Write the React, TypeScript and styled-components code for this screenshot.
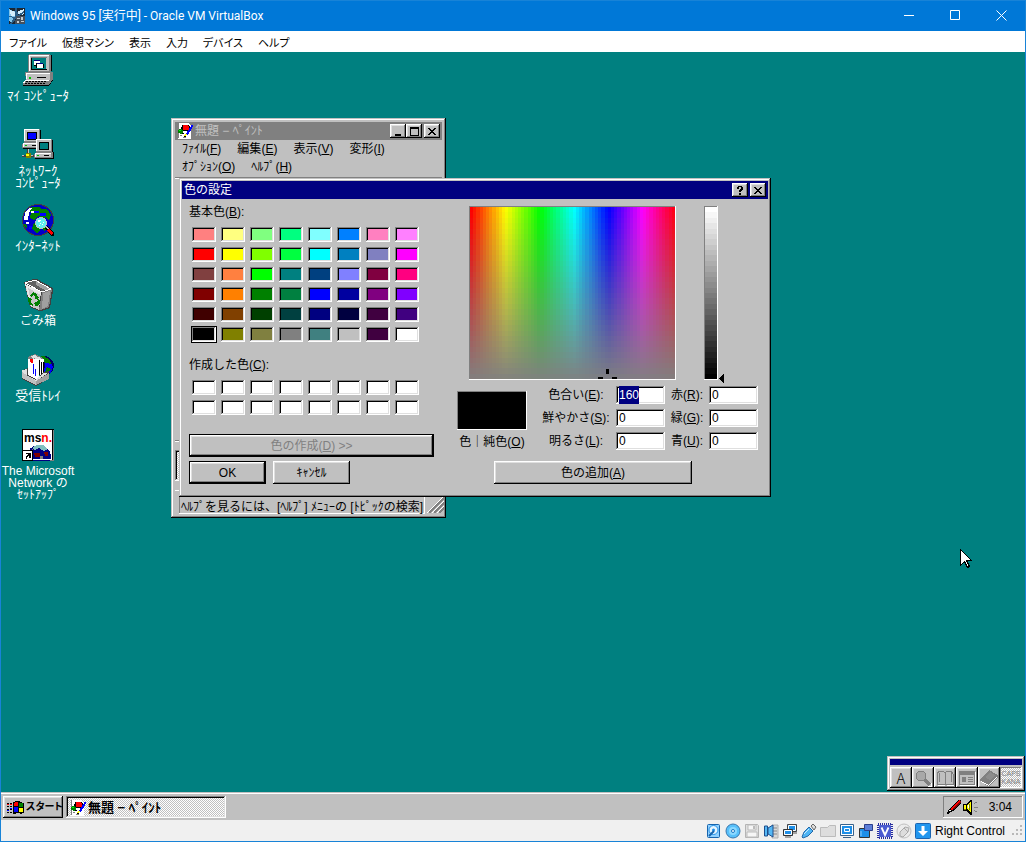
import React, { useEffect, useRef } from "react";
import styled, { createGlobalStyle, css } from "styled-components";

const GlobalStyle = createGlobalStyle`
  * { box-sizing: border-box; }
  body { margin: 0; background: #f0f0f0; }
  button, input { font: inherit; color: inherit; margin: 0; padding: 0; border: 0; border-radius: 0; }
  svg { display: block; flex: none; }
`;

const raisedWindow = css`
  background: #c0c0c0;
  box-shadow: inset -1px -1px #000, inset 1px 1px #c0c0c0, inset -2px -2px #808080, inset 2px 2px #fff;
`;
const raised = css`
  background: #c0c0c0;
  box-shadow: inset -1px -1px #000, inset 1px 1px #fff, inset -2px -2px #808080, inset 2px 2px #dfdfdf;
`;
const sunken = css`
  box-shadow: inset -1px -1px #fff, inset 1px 1px #808080, inset -2px -2px #dfdfdf, inset 2px 2px #000;
`;
const shallow = css`
  box-shadow: inset -1px -1px #fff, inset 1px 1px #808080;
`;
const dither = css`
  background: repeating-conic-gradient(#fff 0 25%, #c0c0c0 0 50%) 0 0 / 2px 2px;
`;

/* ---------- host window ---------- */

const Shell = styled.div`
  min-height: 100vh;
  display: flex;
  flex-direction: column;
  border: 1px solid #1883d7;
  color: #000;
  font: 12px/14px "Liberation Sans", "Noto Sans CJK JP", sans-serif;
`;
const HostTitle = styled.header`
  display: flex;
  align-items: center;
  gap: 5px;
  height: 30px;
  padding-left: 8px;
  background: #0078d7;
  color: #fff;
  font: 12px/16px Roboto, "Noto Sans CJK JP", sans-serif;
`;
const HostName = styled.span`
  flex: 1;
`;
const HostButton = styled.button`
  width: 46px;
  height: 30px;
  display: grid;
  place-items: center;
  background: none;
`;
const HostButtons = styled.div`
  display: flex;
`;
const HostMenu = styled.nav`
  display: flex;
  align-items: center;
  gap: 15px;
  height: 21px;
  padding-left: 8px;
  background: #fff;
  font: 11px/16px "Noto Sans CJK JP", sans-serif;
  font-feature-settings: "palt";
`;
const PlainButton = styled.button`
  background: none;
  white-space: nowrap;
`;

/* ---------- desktop ---------- */

const Desktop = styled.main`
  position: relative;
  flex: 1;
  min-height: 500px;
  background: #008080;
  overflow: hidden;
`;
const IconColumn = styled.div`
  display: flex;
  flex-direction: column;
  width: 74px;
  padding-top: 2px;
`;
const DesktopIcon = styled.button<{ $small?: boolean }>`
  display: flex;
  flex-direction: column;
  align-items: center;
  gap: 4px;
  height: 75px;
  background: none;
  color: #fff;
  font-size: ${(p) => (p.$small ? 12 : 13)}px;
  line-height: 12px;
  white-space: pre;
`;

/* ---------- windows ---------- */

const PaintWindow = styled.section`
  position: absolute;
  left: 170px;
  top: 66px;
  width: 275px;
  height: 400px;
  padding: 4px;
  display: flex;
  flex-direction: column;
  ${raisedWindow}
`;
const TitleBar = styled.div<{ $active?: boolean }>`
  display: flex;
  align-items: center;
  gap: 2px;
  height: 18px;
  padding: 0 2px;
  background: ${(p) => (p.$active ? "#000080" : "#808080")};
  color: ${(p) => (p.$active ? "#fff" : "#c0c0c0")};
`;
const TitleText = styled.span`
  flex: 1;
`;
const TitleButton = styled.button`
  width: 16px;
  height: 14px;
  display: grid;
  place-items: center;
  color: #000;
  ${raised}
`;
const ButtonPair = styled.div`
  display: flex;
`;
const PaintMenu = styled.nav`
  display: flex;
  flex-wrap: wrap;
  column-gap: 16px;
  padding: 0 7px;
  line-height: 18px;
`;
const PaintBody = styled.div`
  flex: 1;
  display: flex;
  flex-direction: column;
  margin-top: 1px;
  border-top: 1px solid #808080;
`;
const PaintCanvas = styled.div`
  flex: 1;
  border-top: 1px solid #fff;
  border-bottom: 1px solid #808080;
`;
const PaletteBar = styled.div`
  height: 50px;
  padding: 8px 0;
  border-top: 1px solid #fff;
  border-bottom: 1px solid #fff;
`;
const PaletteWell = styled.div`
  width: 31px;
  height: 31px;
  ${dither}
  ${sunken}
`;
const PaintStatus = styled.footer`
  display: flex;
  justify-content: space-between;
  gap: 2px;
  height: 23px;
  padding-top: 5px;
  padding-left: 4px;
`;
const StatusField = styled.div`
  flex: 1;
  padding: 2px 2px 0;
  line-height: 18px;
  white-space: nowrap;
  ${shallow}
`;

const Dialog = styled.section`
  position: absolute;
  left: 178px;
  top: 126px;
  width: 592px;
  padding: 3px;
  ${raisedWindow}
`;
const DialogBody = styled.form`
  display: flex;
  gap: 23px;
  padding: 6px 10px 10px 7px;
`;
const LeftPane = styled.div`
  width: 245px;
  display: flex;
  flex-direction: column;
`;
const GroupLabel = styled.div`
  line-height: 14px;
  margin-bottom: 8px;
`;
const SwatchGrid = styled.div<{ $after: number }>`
  display: grid;
  grid-template-columns: repeat(8, 24px);
  gap: 5px;
  padding-left: 3px;
  margin-bottom: ${(p) => p.$after}px;
`;
const Swatch = styled.button<{ $color: string; $selected?: boolean }>`
  height: 15px;
  background: ${(p) => p.$color};
  outline: ${(p) => (p.$selected ? "1px solid #000" : "none")};
  ${sunken}
`;
const PushButton = styled.button<{ $framed?: boolean; $width: string }>`
  width: ${(p) => p.$width};
  height: 23px;
  ${raised}
  border: ${(p) => (p.$framed ? "1px solid #000" : "0")};
  &:disabled { color: #808080; }
`;
const ButtonRow = styled.div`
  display: flex;
  gap: 7px;
  margin-top: 4px;
`;
const RightPane = styled.div`
  flex: 1;
  display: flex;
  flex-direction: column;
`;
const Pickers = styled.div`
  display: flex;
  padding: 1px 0 0 12px;
  margin-bottom: 6px;
`;
const Well = styled.div`
  ${shallow}
  padding: 1px;
`;
const BarHolder = styled.div`
  display: flex;
  align-items: flex-end;
  gap: 1px;
  margin-left: 28px;
`;
const Arrow = styled.svg`
  margin-bottom: -3px;
`;
const ValuesRow = styled.div`
  display: flex;
  align-items: flex-start;
`;
const PreviewBox = styled.div`
  width: 70px;
  padding-top: 5px;
  text-align: center;
  white-space: nowrap;
`;
const Preview = styled.div`
  height: 39px;
  margin-bottom: 5px;
  background: #000;
  ${shallow}
`;
const FieldGrid = styled.div`
  flex: 1;
  display: grid;
  grid-template-columns: 80px 49px 1fr 49px;
  row-gap: 5px;
  padding-left: 9px;
  text-align: center;
  line-height: 18px;
`;
const NumberField = styled.input`
  width: 49px;
  height: 18px;
  padding: 0 3px;
  background: #fff;
  outline: none;
  ${sunken}
  &::selection { background: #000080; color: #fff; }
`;
const AddRow = styled.div`
  margin-top: 11px;
  padding-left: 37px;
`;

/* ---------- input bar, task bar, host status ---------- */

const InputBar = styled.section`
  position: absolute;
  right: 0;
  bottom: 1px;
  width: 138px;
  padding: 3px;
  ${raisedWindow}
`;
const InputCaption = styled.div`
  height: 6px;
  margin-bottom: 2px;
  background: #000080;
`;
const InputButtons = styled.div`
  display: grid;
  grid-template-columns: repeat(6, 22px);
`;
const InputButton = styled.button<{ $down?: boolean }>`
  height: 21px;
  display: grid;
  place-items: center;
  ${(p) => (p.$down ? css`${dither} ${shallow}` : raised)}
`;
const KeyState = styled.span`
  color: #808080;
  font-size: 7px;
  line-height: 8px;
`;
const Letter = styled.span`
  font-family: "Noto Sans CJK JP", sans-serif;
  font-weight: 300;
  font-size: 15px;
`;
const Pointer = styled.svg`
  position: absolute;
  left: 959px;
  top: 497px;
`;
const TaskBar = styled.div`
  display: flex;
  gap: 3px;
  height: 28px;
  padding: 4px 2px 2px;
  background: #c0c0c0;
  box-shadow: inset 0 1px #c0c0c0, inset 0 2px #fff;
`;
const StartButton = styled.button`
  display: flex;
  align-items: center;
  gap: 1px;
  width: 60px;
  padding-left: 4px;
  font-weight: bold;
  font-size: 10px;
  font-feature-settings: "palt";
  white-space: nowrap;
  ${raised}
`;
const TaskButton = styled.button`
  display: flex;
  align-items: center;
  gap: 2px;
  width: 160px;
  padding: 2px 0 0 4px;
  font-weight: bold;
  font-size: 13px;
  ${dither}
  ${sunken}
`;
const Tray = styled.div`
  display: flex;
  align-items: center;
  width: 80px;
  margin-left: auto;
  padding: 0 11px 0 3px;
  ${shallow}
`;
const Clock = styled.time`
  margin-left: auto;
`;
const HostStatus = styled.footer`
  display: flex;
  align-items: center;
  justify-content: flex-end;
  gap: 3px;
  height: 21px;
  padding-right: 2px;
  background: #f0f0f0;
  font: 12px/16px "Liberation Sans", sans-serif;
`;
const HostKey = styled.span`
  margin: 0 4px 0 1px;
`;

/* ---------- drawings ---------- */

type ArtProps = { w?: number; h?: number; children: React.ReactNode };
const Art = ({ w = 32, h = 32, children }: ArtProps) => (
  <svg width={w} height={h} viewBox={`0 0 ${w} ${h}`} shapeRendering="crispEdges" aria-hidden="true">
    {children}
  </svg>
);
const P = ({ c, d }: { c: string; d: string }) => <path fill={c} d={d} />;

const Computer = () => (
  <Art>
    <P c="#000" d="M8 17h22v-16h-2v16zM31 18v8l-4 6H1v-1h25l4-5v-8z" />
    <P c="#808080" d="M6 1h1V0h21v1h1v17H6zM3 18h28v7l-4 6H1v-3l3-3z" />
    <P c="#c0c0c0" d="M7 1h20v16H7zM4 19h24v7H4z" />
    <P c="#fff" d="M7 1h20v1H8v15H7zM4 19h24v1H5v5H4zM4 26h23v1H3v2H1v-1z" />
    <P c="#808080" d="M9 3h16v1H10v11H9z" />
    <P c="#000" d="M9 4h1v11h15v1H9z" />
    <P c="#008080" d="M10 4h14v11H10z" />
    <P c="#fff" d="M12 6h6v5h-6zM15 9h6v5h-6z" />
    <P c="#000080" d="M12 6h6v1h-6zM14 9h7v1h-7z" />
    <P c="#000" d="M12 11h3v1h-3zM14 9h1v5h-1zM21 10h1v4h-1zM15 23h9v1h-9zM3 29h2v1H3zM6 29h2v1H6zM9 29h2v1H9zM12 29h2v1h-2zM15 29h2v1h-2zM18 29h2v1h-2zM21 29h2v1h-2zM4 27h2v1H4zM7 27h2v1H7zM10 27h2v1h-2zM13 27h2v1h-2zM16 27h2v1h-2zM19 27h2v1h-2zM22 27h2v1h-2z" />
    <P c="#00c000" d="M7 23h2v2H7z" />
  </Art>
);

const MiniPc = ({ x, y, screen }: { x: number; y: number; screen: string }) => (
  <g transform={`translate(${x} ${y})`}>
    <P c="#000" d="M3 1h16v12h1v7H1v-1h18v-6h-1z" />
    <P c="#808080" d="M2 0h16v13h1v6H0v-4l2-2z" />
    <P c="#c0c0c0" d="M3 1h14v11H3zM1 14h16v4H1z" />
    <P c="#fff" d="M2 0h15v1H3v11H2zM1 14h16v1H2v3H1z" />
    <P c="#000" d="M5 3h10v8H5zM10 16h5v1h-5z" />
    <P c={screen} d="M6 4h8v6H6z" />
    <P c="#00c000" d="M3 16h2v1H3z" />
  </g>
);
const Network = () => (
  <Art>
    <MiniPc x={0} y={0} screen="#0000ff" />
    <P c="#404040" d="M5 20h2v5H5zM0 26h12v2H0z" />
    <P c="#c0c0c0" d="M6 20h1v5H6zM0 26h2v1H0zM9 26h2v1H9z" />
    <P c="#808000" d="M4 24h5v5H4z" />
    <P c="#ffff00" d="M4 25h3v2H4z" />
    <MiniPc x={12} y={10} screen="#008080" />
  </Art>
);
const Internet = () => (
  <Art>
    <circle cx="16" cy="16" r="16" fill="#404040" />
    <circle cx="16" cy="16" r="15" fill="#0000c8" />
    <P c="#008000" d="M9 3h8l3 2h5l4 6-2 6-3-4-4 2-3-3-5 4-4-2 1-5-2-2zM12 19l4 2 2 5-3 4-5-5zM22 21l3 2-2 4-2-1zM2 20l3 1v4l-2-2z" />
    <P c="#fff" d="M3 9l4-5h3L7 9l-1 7H2zM9 7h3v2H9zM4 18h3v2H4z" />
    <P c="#0000ff" d="M12 7h5v2h-5zM18 9h6v3h-6zM7 22h3v3H7z" />
    <circle cx="19" cy="19" r="6" fill="#c0c0c0" />
    <circle cx="19" cy="19" r="5" fill="#60f0f0" />
    <P c="#fff" d="M16 16h3v1h-1v1h-2zM20 20h1v1h-1zM18 19h1v1h-1zM21 18h1v1h-1zM17 21h1v1h-1z" />
    <P c="#000" d="M23 24l2-2 7 7v3h-3z" />
    <P c="#c0c0c0" d="M23 23l1-1 3 3-1 1z" />
    <P c="#ff0000" d="M25 26l2-2 4 5-2 2z" />
  </Art>
);
const Bin = () => (
  <Art>
    <P c="#404040" d="M2 3l10-3h3l16 9v3l-3 17-8 3h-3l-9-4z" />
    <P c="#606060" d="M4 4l9-3 16 9-9 2z" />
    <P c="#a0a0a0" d="M14 2l14 8-5 1-9-5z" />
    <P c="#c8c8c8" d="M3 5l16 8-2 18-9-4z" />
    <P c="#e8e8e8" d="M3 5l16 8v3L4 8zM4 8l2 1 4 18-2-1z" />
    <P c="#808080" d="M20 13l10-3-3 18-8 3h-2z" />
    <P c="#a0a0a0" d="M21 14l7-2-2 15-6 3z" />
    <path d="M3 4l10-3 16 9-9 3z" fill="none" stroke="#fff" />
    <P c="#008000" d="M9 15l2-2 4 2 1 3h1l-1 3-4-2 1-1-2-2-1 2-2-1zM6 18l4 2v2l-1-1v3l2 1v2l-4-2-1-4zM12 24l2-2v1l2-1v-2l2 1v3l-2 3h-2v1z" />
  </Art>
);
const Inbox = () => (
  <Art>
    <circle cx="22" cy="12" r="10" fill="#000060" />
    <P c="#0000ff" d="M23 9h6l2 4-2 6h-7z" />
    <P c="#008000" d="M16 3l6-1 6 4 1 4-5-1-3-2zM25 13l4 2-3 4-3-1z" />
    <P c="#808080" d="M6 3l7-3 8 4v5H6z" />
    <P c="#e0e0e0" d="M9 2l4-1 3 2-5 2zM12 4l5-1 3 2-4 2z" />
    <P c="#fff" d="M6 5h11v20l-5 1-6-3zM18 5h4v16h-4z" />
    <P c="#000" d="M17 6h1v15h-1zM19 8h1v12h-1zM21 8h1v11h-1z" />
    <P c="#0000ff" d="M11 10h1v10h-1zM13 15h1v7h-1z" />
    <P c="#ff0000" d="M8 5h3v4H9L8 8z" />
    <P c="#404040" d="M0 16l6-2v7l8 4 8-7 5-1v8l-13 7L0 25z" />
    <P c="#e0e0e0" d="M0 16l5-1v7l9 4v2L1 21z" />
    <P c="#c0c0c0" d="M0 18l14 9v4L0 24z" />
    <P c="#a0a0a0" d="M14 27l13-8v6l-13 6z" />
    <P c="#e0e0e0" d="M14 25l8-6h4l-12 8z" />
  </Art>
);
const MsnText = styled.text`
  font: bold 12px "Liberation Sans Narrow", "Liberation Sans", sans-serif;
`;
const Msn = () => (
  <Art>
    <P c="#000" d="M0 0h32v32H0z" />
    <P c="#808080" d="M30 1h2v31H1v-1h29z" />
    <P c="#fff" d="M1 1h29v29H1z" />
    <circle cx="17" cy="28" r="12" fill="#000080" />
    <P c="#80c0c0" d="M10 19l5-3h6l5 4-4 2-5-3-4 2z" />
    <P c="#800000" d="M12 24h6v4h-5zM22 23h4v4h-3z" />
    <P c="#808080" d="M7 23l4-4v3l-2 3zM18 27h3v3h-3z" />
    <P c="#fff" d="M1 30h29v1H1z" />
    <P c="#000" d="M0 21h11v11H0zM30 0h1v31h-1z" />
    <P c="#fff" d="M1 22h9v9H1z" />
    <P c="#000" d="M4 24h5v5H7v-2H6v1H5v2H4v-3h1v-1h1v-1H4z" />
    <MsnText x="2" y="13">ms<tspan fill="#f00">n.</tspan></MsnText>
  </Art>
);

const PaintIcon = () => (
  <Art w={16} h={16}>
    <P c="#fff" d="M1 0h10l3 3v13H1z" />
    <P c="#808080" d="M1 0h1v15H1zM3 12h2v1H3zM6 14h3v1H6z" />
    <P c="#000" d="M5 2h7v1h1v5H6V7H4V4h1zM7 13h2v1H7zM3 10h4v1H3z" />
    <P c="#ff0000" d="M6 2h5v1h1v4H6z" />
    <P c="#008000" d="M2 6h3v1h1v3H5v1H3v-1H1V7h1z" />
    <P c="#00ff00" d="M2 7h2v1H2z" />
    <P c="#0000ff" d="M14 2h2v2h-1v2h-1v2h-1v1h-1v2h-1v1h-2v-2h1V8h1V7h1V5h1V4h1z" />
    <P c="#ffff00" d="M8 11h2v1H9v1H7v-1h1z" />
  </Art>
);
const HostLogo = () => (
  <Art w={16} h={16}>
    <P c="#1b2733" d="M0 0h16v16H0z" />
    <P c="#7fc4ea" d="M0 1l7 3 1 5-5 6-3-2z" />
    <P c="#d5effc" d="M1 2l5 2 1 3-5 2zM9 3l6-2v5l-5 2z" />
    <P c="#2a5d86" d="M6 0h2l1 8-6 8H1l5-8zM9 7l6-4v2l-6 4zM0 8l6 1v1L0 9z" />
    <P c="#45505c" d="M7 8h9v8H6z" />
    <P c="#c4ccd2" d="M8 10h3v1H8zM12 9h2v3h-2zM8 13h2v2H8zM12 13h3v1h-3z" />
  </Art>
);
const StartFlag = () => (
  <Art w={18} h={16}>
    <P c="#000" d="M6 3h2V2h5v1h2v1h2v10h-2v1h-2v-1H9v1H6zM0 4h2v1H0zM3 4h2v1H3zM0 7h2v1H0zM3 7h2v1H3zM0 10h2v1H0zM3 10h2v1H3zM0 13h2v1H0zM3 13h2v1H3z" />
    <P c="#ff0000" d="M7 4h1V3h3v4H7zM3 5h2v1H3zM0 5h2v1H0z" />
    <P c="#008000" d="M12 4h4v4h-4z" />
    <P c="#0000ff" d="M7 8h4v5H7zM3 9h2v1H3zM0 11h2v1H0z" />
    <P c="#ffff00" d="M12 9h4v4h-4z" />
  </Art>
);
const Pen = () => (
  <Art w={17} h={16}>
    <P c="#000" d="M12 1h3v3l-8 8-5 3H1v-1l3-5z" />
    <P c="#ff0000" d="M13 1h1v2L6 11 4 10z" />
    <P c="#800000" d="M14 2h1v1L8 10H6z" />
    <P c="#fff" d="M3 11h2v1H3z" />
  </Art>
);
const Speaker = () => (
  <Art w={16} h={16}>
    <P c="#000" d="M0 5h3l4-4h2v15H7l-4-4H0z" />
    <P c="#ffff00" d="M1 6h2v4H1zM4 6l4-4v12l-4-4z" />
    <P c="#808000" d="M6 5h1v6H6zM1 10h2v1H1z" />
    <P c="#fff" d="M5 6h1v3H5z" />
    <P c="#808080" d="M11 4h1V3h2v1h-2v1h-1zM11 8h4v1h-4zM11 12h1v1h2v-1h-2v-1h-1z" />
  </Art>
);

const Glyph = ({ kind }: { kind: "min" | "max" | "close" | "help" }) => {
  const d = {
    min: "M2 7h6v2H2z",
    max: "M1 0h9v9H1zM2 2v6h7V2z",
    close: "M1 1h2v1h1v1h2V2h1V1h2v1H8v1H7v1H6v1h1v1h1v1h1v1H7V7H6V6H4v1H3v1H1V7h1V6h1V5h1V4H3V3H2V2H1z",
    help: "M3 0h4v1h1v3H7v1H6v1H4V4h1V3h1V1H4v2H2V1h1zM4 7h2v2H4z",
  }[kind];
  return (
    <Art w={11} h={9}>
      <path d={d} fillRule="evenodd" />
    </Art>
  );
};

const HostGlyph = ({ kind }: { kind: "min" | "max" | "close" }) => (
  <svg width="12" height="12" viewBox="0 0 12 12" fill="none" stroke="#fff" aria-hidden="true">
    {kind === "min" && <path d="M0 5.500h10" />}
    {kind === "max" && <path d="M.5.5h9v9h-9z" />}
    {kind === "close" && <path d="M.5.5l10 10M10.500.5l-10 10" />}
  </svg>
);

const Spectrum = () => (
  <Art w={205} h={172}>
    {Array.from({ length: 64 }, (_, i) => {
      const x = Math.round((i * 205) / 64);
      return <rect key={i} x={x} y="0" width={Math.round(((i + 1) * 205) / 64) - x} height="172" fill={`hsl(${(i * 360) / 64} 100% 50%)`} />;
    })}
    {Array.from({ length: 32 }, (_, j) => {
      const y = Math.round((j * 172) / 32);
      return <rect key={j} x="0" y={y} width="205" height={Math.round(((j + 1) * 172) / 32) - y} fill="#808080" fillOpacity={j / 32} />;
    })}
    <P c="#000" d="M136 162h3v5h-3zM128 170h5v2h-5zM142 170h5v2h-5z" />
  </Art>
);
const Brightness = () => (
  <Art w={12} h={172}>
    {Array.from({ length: 32 }, (_, j) => {
      const y = Math.round((j * 172) / 32);
      const v = 255 - Math.round((j * 255) / 31);
      return <rect key={j} x="0" y={y} width="12" height={Math.round(((j + 1) * 172) / 32) - y} fill={`rgb(${v},${v},${v})`} />;
    })}
  </Art>
);

const Magnifier = () => (
  <Art w={18} h={18}>
    <path d="M10 10l6 6" stroke="#808080" strokeWidth="3" />
    <circle cx="7" cy="7" r="5" fill="#a8a8a8" stroke="#808080" />
    <P c="#fff" d="M14 17h3v-3h1v4h-4z" />
  </Art>
);
const OpenBook = () => (
  <Art w={18} h={18}>
    <path d="M1 15V5l2-3h4l2 2 2-2h4l2 3v10h-6l-2 1-2-1zM9 4v11M3 13V4M15 13V4" fill="none" stroke="#808080" />
    <P c="#fff" d="M2 16h7v1H2zM11 16h7v1h-7z" />
  </Art>
);
const Panel = () => (
  <Art w={18} h={18}>
    <P c="#808080" d="M1 2h16v14H1z" />
    <P c="#c0c0c0" d="M2 6h14v9H2z" />
    <P c="#808080" d="M4 8h4v5H4zM10 8h5v1h-5zM10 10h5v1h-5zM10 12h5v1h-5z" />
    <P c="#fff" d="M2 16h16v1H2zM17 3h1v13h-1z" />
  </Art>
);
const ClosedBook = () => (
  <Art w={18} h={18}>
    <P c="#808080" d="M0 10l9-9 9 5v2l-9 10-9-6z" />
    <P c="#fff" d="M1 12l8 4 8-9v1l-8 9-8-4z" />
    <P c="#8c8c8c" d="M5 8l5-5 5 3-5 5z" />
  </Art>
);

/* Device indicators of the host status bar. */
const blue = "#1e8fe8";
const navy = "#1f4e8c";
const deviceArt: Record<string, React.ReactNode> = {
  disk: (<><rect x="1.500" y="1.500" width="12" height="13" rx="1" fill="#8fd0ff" stroke="#1764ad" /><circle cx="7.500" cy="7" r="4.500" fill="#e6f5ff" stroke={blue} /><circle cx="7.500" cy="7" r="1.500" fill={blue} /><path d="M3 13l5-5" stroke="#1764ad" strokeWidth="2" /></>),
  disc: (<><circle cx="8" cy="8" r="7" fill="#58c0fa" stroke="#3a78ae" /><circle cx="8" cy="8" r="4" fill="#8cd8ff" /><circle cx="8" cy="8" r="1.500" fill="#fff" stroke="#1d79c4" /></>),
  floppy: (<><path d="M1.500 1.500h12l1 1v12h-13z" fill="#e0e0e0" stroke="#b4b4b4" /><path d="M4 2h8v5H4zM3 9h10v5H3z" fill="#f6f6f6" stroke="#bbb" /><path d="M9 3h2v3H9z" fill="#bbb" /></>),
  audio: (<><path d="M9 2h6v13H9z" fill="#d8d8d8" stroke="#b0b0b0" /><path d="M10 5h4M10 8h4M10 11h4" stroke="#888" /><path d="M1.500 3h3v10h-3zM5 5l5-3v12l-5-3z" fill="#55b8f5" stroke={navy} /></>),
  net: (<><path d="M5.500 1.500h9v7h-9z" fill={blue} stroke="#444" /><path d="M6.500 2.500h7v5h-7z" stroke="#fff" fill="none" /><path d="M1.500 6.500h9v6h-9z" fill={blue} stroke="#333" /><path d="M2.500 7.500h7v4h-7z" stroke="#fff" fill="none" /><path d="M3 14h6M11 10h4" stroke="#555" /></>),
  usb: (<><path d="M10 3l2-2 3 3-2 3z" fill="#ddd" stroke="#666" /><path d="M8 4l4 4-5 5-5 2-1-1 2-5z" fill="#4fb5f5" stroke="#2468a8" /><path d="M3 11l5-5" stroke="#c8ecff" /></>),
  folder: <path d="M.5 4.500h7l2-2h6v11H.5z" fill="#ddd" stroke="#bbb" />,
  display: (<><path d="M1.500 1.500h13v11h-13z" fill="#fff" stroke="#38628c" /><path d="M3 3h10v8H3z" fill={blue} /><path d="M5.500 5.500h5v3h-5z" fill={blue} stroke="#fff" /><path d="M4 14.500h8" stroke="#38628c" /></>),
  record: (<><path d="M1.500 5.500h10v9h-10z" fill={blue} stroke="#333" /><path d="M6.500 1.500h8v6h-8z" fill="#5d7fd8" stroke="#2c3f8c" /><path d="M3 8v5" stroke="#8fd0ff" /></>),
  cpu: (<><rect x="1" y="1" width="14" height="14" fill="none" stroke="#2a2f9c" strokeWidth="2" strokeDasharray="1 1" /><rect x="2" y="2" width="12" height="12" rx="1" fill="#4a5ad0" /><path d="M4.500 4.500L8 12l3.500-7.500" stroke="#fff" strokeWidth="1.800" fill="none" /></>),
  mouse: (<><circle cx="8" cy="8" r="7" fill="#ececec" stroke="#c0c0c0" /><path d="M4 9l5-5 4 1-1 4-5 5-3-1z" fill="#ddd" stroke="#aaa" /><path d="M8 5l4 4" stroke="#aaa" /></>),
  capture: (<><rect x=".5" y=".5" width="15" height="15" rx="1" fill="#2196ee" stroke="#1a64b0" /><path d="M6.500 3h3v5H13l-5 5-5-5h3.500z" fill="#fff" /></>),
};
const DeviceButton = styled.button`
  width: 16px;
  height: 16px;
  background: none;
`;

/* ---------- content ---------- */

const basicColors = [
  "#ff8080", "#ffff80", "#80ff80", "#00ff80", "#80ffff", "#0080ff", "#ff80c0", "#ff80ff",
  "#ff0000", "#ffff00", "#80ff00", "#00ff40", "#00ffff", "#0080c0", "#8080c0", "#ff00ff",
  "#804040", "#ff8040", "#00ff00", "#008080", "#004080", "#8080ff", "#800040", "#ff0080",
  "#800000", "#ff8000", "#008000", "#008040", "#0000ff", "#0000a0", "#800080", "#8000ff",
  "#400000", "#804000", "#004000", "#004040", "#000080", "#000040", "#400040", "#400080",
  "#000000", "#808000", "#808040", "#808080", "#408080", "#c0c0c0", "#400040", "#ffffff",
];

const desktopIcons = [
  { label: "ﾏｲ ｺﾝﾋﾟｭｰﾀ", art: <Computer /> },
  { label: "ﾈｯﾄﾜｰｸ\nｺﾝﾋﾟｭｰﾀ", art: <Network /> },
  { label: "ｲﾝﾀｰﾈｯﾄ", art: <Internet /> },
  { label: "ごみ箱", art: <Bin />, small: true },
  { label: "受信ﾄﾚｲ", art: <Inbox /> },
  { label: "The Microsoft\nNetwork の\nｾｯﾄｱｯﾌﾟ", art: <Msn />, small: true },
];

const paintMenus = [["ﾌｧｲﾙ", "F"], ["編集", "E"], ["表示", "V"], ["変形", "I"], ["ｵﾌﾟｼｮﾝ", "O"], ["ﾍﾙﾌﾟ", "H"]];
const fields = [
  { id: "hue", text: "色合い", k: "E", value: "160" },
  { id: "red", text: "赤", k: "R", value: "0" },
  { id: "sat", text: "鮮やかさ", k: "S", value: "0" },
  { id: "green", text: "緑", k: "G", value: "0" },
  { id: "lum", text: "明るさ", k: "L", value: "0" },
  { id: "blue", text: "青", k: "U", value: "0" },
];

const Key = ({ k }: { k: string }) => <>(<u>{k}</u>)</>;

function ColorDialog() {
  const hue = useRef<HTMLInputElement>(null);
  useEffect(() => {
    hue.current?.focus();
    hue.current?.select();
  }, []);
  return (
    <Dialog>
      <TitleBar $active>
        <TitleText>色の設定</TitleText>
        <TitleButton aria-label="Help"><Glyph kind="help" /></TitleButton>
        <TitleButton aria-label="Close"><Glyph kind="close" /></TitleButton>
      </TitleBar>
      <DialogBody onSubmit={(e) => e.preventDefault()}>
        <LeftPane>
          <GroupLabel>基本色<Key k="B" />:</GroupLabel>
          <SwatchGrid $after={16}>
            {basicColors.map((c, i) => (
              <Swatch type="button" key={i} $color={c} $selected={i === 40} aria-label={c} />
            ))}
          </SwatchGrid>
          <GroupLabel>作成した色<Key k="C" />:</GroupLabel>
          <SwatchGrid $after={19}>
            {Array.from({ length: 16 }, (_, i) => (
              <Swatch type="button" key={i} $color="#ffffff" aria-label="#ffffff" />
            ))}
          </SwatchGrid>
          <PushButton type="button" $width="100%" $framed disabled>色の作成<Key k="D" /> &gt;&gt;</PushButton>
          <ButtonRow>
            <PushButton $width="77px" $framed>OK</PushButton>
            <PushButton type="button" $width="77px">ｷｬﾝｾﾙ</PushButton>
          </ButtonRow>
        </LeftPane>
        <RightPane>
          <Pickers>
            <Well><Spectrum /></Well>
            <BarHolder>
              <Well><Brightness /></Well>
              <Arrow width="5" height="9" viewBox="0 0 5 9" shapeRendering="crispEdges" aria-hidden="true">
                <path d="M5 0v9L0 4.500z" />
              </Arrow>
            </BarHolder>
          </Pickers>
          <ValuesRow>
            <PreviewBox>
              <Preview />
              色｜純色<Key k="O" />
            </PreviewBox>
            <FieldGrid>
              {fields.map((f) => (
                <React.Fragment key={f.id}>
                  <label htmlFor={f.id}>{f.text}<Key k={f.k} />:</label>
                  <NumberField id={f.id} defaultValue={f.value} ref={f.id === "hue" ? hue : undefined} />
                </React.Fragment>
              ))}
            </FieldGrid>
          </ValuesRow>
          <AddRow>
            <PushButton type="button" $width="198px">色の追加<Key k="A" /></PushButton>
          </AddRow>
        </RightPane>
      </DialogBody>
    </Dialog>
  );
}

export default function App() {
  return (
    <Shell>
      <GlobalStyle />
      <HostTitle>
        <HostLogo />
        <HostName>Windows 95 [実行中] - Oracle VM VirtualBox</HostName>
        <HostButtons>
          <HostButton aria-label="Minimize"><HostGlyph kind="min" /></HostButton>
          <HostButton aria-label="Maximize"><HostGlyph kind="max" /></HostButton>
          <HostButton aria-label="Close"><HostGlyph kind="close" /></HostButton>
        </HostButtons>
      </HostTitle>
      <HostMenu>
        {["ファイル", "仮想マシン", "表示", "入力", "デバイス", "ヘルプ"].map((m) => (
          <PlainButton key={m}>{m}</PlainButton>
        ))}
      </HostMenu>
      <Desktop>
        <IconColumn>
          {desktopIcons.map((d) => (
            <DesktopIcon key={d.label} $small={d.small}>{d.art}<span>{d.label}</span></DesktopIcon>
          ))}
        </IconColumn>
        <PaintWindow>
          <TitleBar>
            <PaintIcon />
            <TitleText>無題 − ﾍﾟｲﾝﾄ</TitleText>
            <ButtonPair>
              <TitleButton aria-label="Minimize"><Glyph kind="min" /></TitleButton>
              <TitleButton aria-label="Maximize"><Glyph kind="max" /></TitleButton>
            </ButtonPair>
            <TitleButton aria-label="Close"><Glyph kind="close" /></TitleButton>
          </TitleBar>
          <PaintMenu>
            {paintMenus.map(([t, k]) => (
              <PlainButton key={k}>{t}<Key k={k} /></PlainButton>
            ))}
          </PaintMenu>
          <PaintBody>
            <PaintCanvas />
            <PaletteBar><PaletteWell /></PaletteBar>
          </PaintBody>
          <PaintStatus>
            <StatusField>ﾍﾙﾌﾟを見るには、[ﾍﾙﾌﾟ] ﾒﾆｭｰの [ﾄﾋﾟｯｸの検索]</StatusField>
            <Art w={17} h={17}>
              <path d="M2 17L17 2M7 17L17 7M12 17L17 12" stroke="#808080" strokeWidth="2" />
              <path d="M0 17L17 0M5 17L17 5M10 17L17 10" stroke="#fff" />
            </Art>
          </PaintStatus>
        </PaintWindow>
        <ColorDialog />
        <InputBar>
          <InputCaption />
          <InputButtons>
            <InputButton><Letter>A</Letter></InputButton>
            <InputButton aria-label="Search"><Magnifier /></InputButton>
            <InputButton aria-label="Dictionary"><OpenBook /></InputButton>
            <InputButton aria-label="Properties"><Panel /></InputButton>
            <InputButton aria-label="Help"><ClosedBook /></InputButton>
            <InputButton $down><KeyState>CAPS<br />KANA</KeyState></InputButton>
          </InputButtons>
        </InputBar>
        <Pointer width="12" height="19" viewBox="0 0 12 19" shapeRendering="crispEdges" aria-hidden="true">
          <path d="M.5.5v16l4-4 3 6 2-1-3-6h5z" fill="#fff" stroke="#000" />
        </Pointer>
      </Desktop>
      <TaskBar>
        <StartButton><StartFlag />スタート</StartButton>
        <TaskButton><PaintIcon />無題 − ﾍﾟｲﾝﾄ</TaskButton>
        <Tray><Pen /><Speaker /><Clock>3:04</Clock></Tray>
      </TaskBar>
      <HostStatus>
        {Object.entries(deviceArt).map(([name, art]) => (
          <DeviceButton key={name} aria-label={name}>
            <svg width="16" height="16" viewBox="0 0 16 16" aria-hidden="true">{art}</svg>
          </DeviceButton>
        ))}
        <HostKey>Right Control</HostKey>
        <Art w={11} h={11}>
          <P c="#b8b8b8" d="M8 0h2v2H8zM4 4h2v2H4zM8 4h2v2H8zM0 8h2v2H0zM4 8h2v2H4zM8 8h2v2H8z" />
        </Art>
      </HostStatus>
    </Shell>
  );
}
